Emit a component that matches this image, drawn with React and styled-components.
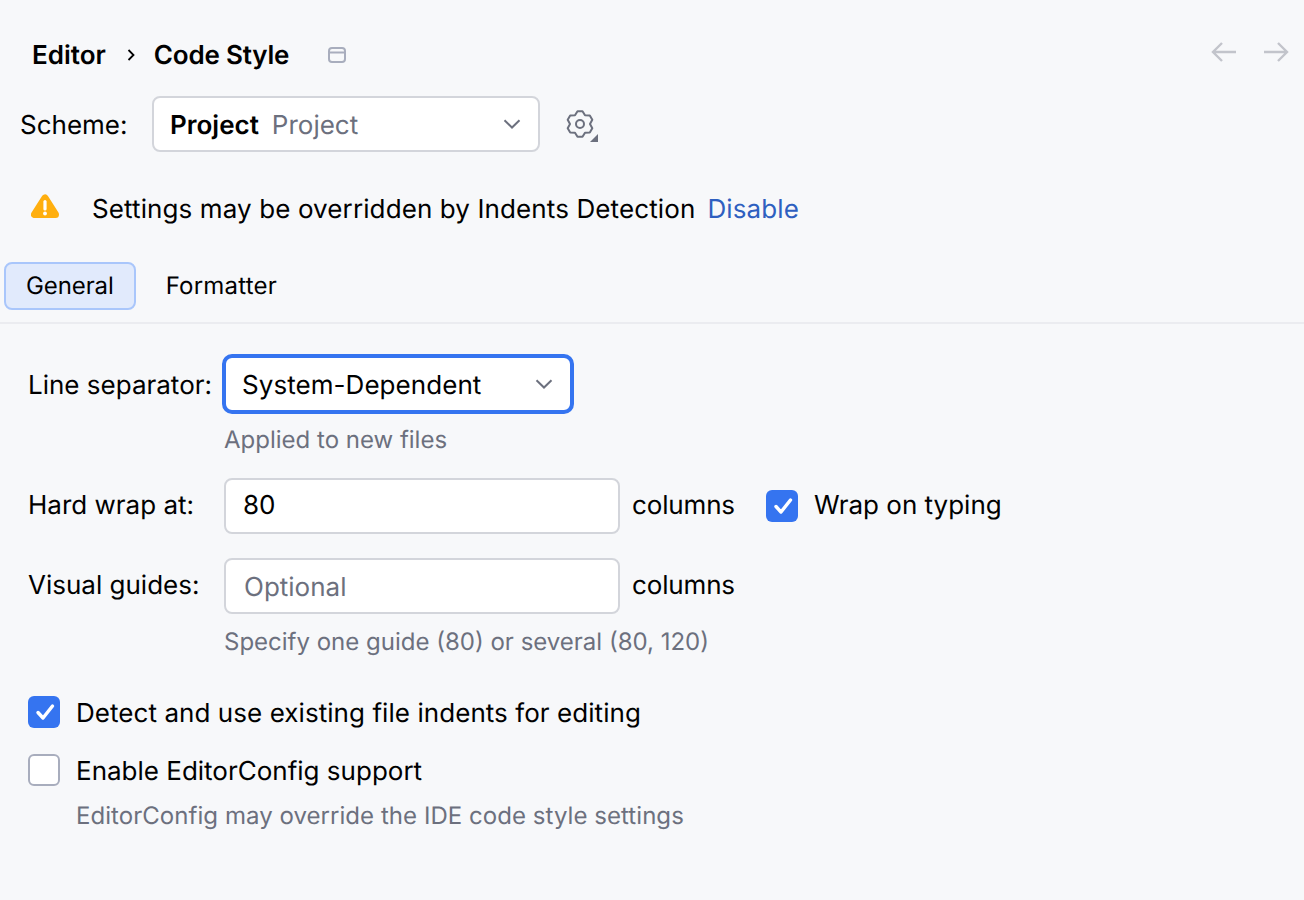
import React from "react";
import styled, { createGlobalStyle } from "styled-components";

const GlobalStyle = createGlobalStyle`
  html, body {
    margin: 0;
    padding: 0;
    background: #f7f8fa;
  }
  body {
    font-family: Inter, "Liberation Sans", sans-serif;
    font-size: 26px;
    color: #000;
    text-rendering: geometricPrecision;
  }
`;

const Page = styled.div`
  width: 1304px;
  height: 900px;
  overflow: hidden;
  display: flex;
  flex-direction: column;
`;

const Header = styled.div`
  height: 36px;
  margin-top: 37px;
  padding: 0 15px 0 32px;
  display: flex;
  align-items: center;
`;

const Crumb = styled.span`
  font-weight: 600;
  line-height: 36px;
  padding-top: 2px;
  letter-spacing: ${(p) => p.$tracking || 0}px;
`;

const CrumbArrow = styled.svg`
  width: 10px;
  height: 16px;
  margin: 0 18px 0 20px;
`;

const PinIcon = styled.svg`
  width: 18px;
  height: 18px;
  margin-left: 39px;
`;

const NavArrows = styled.div`
  margin: 0 0 6px auto;
  display: flex;
  gap: 26px;
`;

const SchemeRow = styled.div`
  margin-top: 23px;
  padding-left: 20px;
  display: flex;
  align-items: center;
  height: 56px;
`;

const SchemeLabel = styled.span`
  width: 132px;
  padding-top: 2px;
`;

const Select = styled.div`
  box-sizing: border-box;
  flex-shrink: 0;
  width: ${(p) => p.$width}px;
  height: ${(p) => (p.$focused ? 60 : 56)}px;
  margin-left: ${(p) => (p.$focused ? -2 : 0)}px;
  background: #fff;
  border: ${(p) => (p.$focused ? "4px solid #3574f0" : "2px solid #d3d5db")};
  border-radius: ${(p) => (p.$focused ? 10 : 8)}px;
  display: flex;
  align-items: center;
  padding: 0 17px 0 16px;
`;

const SelectText = styled.span`
  padding-top: 2px;
  letter-spacing: ${(p) => p.$tracking || 0}px;
`;

const Bold = styled(SelectText)`
  font-weight: 600;
`;

const Muted = styled(SelectText)`
  color: #6c707e;
  margin-left: 13px;
`;

const Chevron = styled.svg`
  width: 18px;
  height: 10px;
  margin-left: auto;
`;

const GearWrap = styled.div`
  position: relative;
  width: 32px;
  height: 32px;
  margin: 2px 0 0 24px;
`;

const Corner = styled.svg`
  position: absolute;
  right: -2px;
  bottom: -1px;
  width: 8px;
  height: 8px;
`;

const Notice = styled.div`
  margin-top: 28px;
  padding-left: 31px;
  height: 56px;
  display: flex;
  align-items: center;
`;

const WarnIcon = styled.svg`
  width: 28px;
  height: 24px;
  margin: 0 33px 4px 0;
`;

const NoticeText = styled.span`
  padding-top: 2px;
  letter-spacing: 0.11px;
`;

const Link = styled.a`
  color: #2e5fc0;
  margin-left: 12px;
  padding-top: 2px;
  letter-spacing: 0.12px;
`;

const Tabs = styled.div`
  margin-top: 26px;
  padding-left: 4px;
  display: flex;
  height: 62px;
  box-sizing: border-box;
  border-bottom: 2px solid #ebecf0;
  align-items: flex-start;
`;

const Tab = styled.div`
  box-sizing: border-box;
  height: 48px;
  padding: 0 20px 2px;
  font-size: 24px;
  display: flex;
  align-items: center;
  border-radius: 8px;
  border: 2px solid ${(p) => (p.$active ? "#a9c6fb" : "transparent")};
  background: ${(p) => (p.$active ? "#e1eafc" : "transparent")};
  margin-right: 8px;
  letter-spacing: ${(p) => (p.$active ? -0.1 : 0.2)}px;
`;

const Form = styled.div`
  padding-left: 28px;
  display: flex;
  flex-direction: column;
`;

const Row = styled.div`
  display: flex;
  align-items: center;
  height: ${(p) => p.$height || 56}px;
  margin-top: ${(p) => p.$top || 0}px;
`;

const Label = styled.span`
  width: 196px;
  flex-shrink: 0;
  padding: ${(p) => (p.$low ? "2px 0 0" : "0 0 2px")};
`;

const Hint = styled.div`
  color: #6c707e;
  font-size: 24px;
  line-height: 30px;
  margin-top: ${(p) => p.$top || 0}px;
  margin-left: ${(p) => p.$left}px;
  letter-spacing: ${(p) => p.$tracking || 0}px;
`;

const Field = styled.div`
  box-sizing: border-box;
  width: 396px;
  height: 56px;
  background: #fff;
  border: 2px solid #d3d5db;
  border-radius: 8px;
  padding: ${(p) => (p.$placeholder ? "2px 18px 0" : "0 17px 2px")};
  display: flex;
  align-items: center;
  color: ${(p) => (p.$placeholder ? "#6c707e" : "#000")};
`;

const Unit = styled.span`
  margin-left: 12px;
  padding-bottom: 2px;
  letter-spacing: -0.15px;
`;

const Box = styled.span`
  box-sizing: border-box;
  width: 32px;
  height: 32px;
  border-radius: 6px;
  flex-shrink: 0;
  display: flex;
  align-items: center;
  justify-content: center;
  background: ${(p) => (p.$checked ? "#3574f0" : "#fff")};
  border: ${(p) => (p.$checked ? "none" : "2px solid #a8adbd")};
`;

const CheckText = styled.span`
  margin-left: 16px;
  padding: ${(p) => (p.$low ? "2px 0 0" : "0 0 2px")};
  letter-spacing: ${(p) => p.$tracking || 0}px;
`;

const InlineCheck = styled.div`
  display: flex;
  align-items: center;
  margin-left: 31px;
`;

const Arrow = ({ flip }) => (
  <svg width="26" height="22" viewBox="0 0 26 22" fill="none" style={flip ? { transform: "scaleX(-1)" } : undefined}>
    <path d="M25 11H2M11 2L2 11l9 9" stroke="#c2c4cb" strokeWidth="2.4" />
  </svg>
);

const Check = () => (
  <svg width="22" height="18" viewBox="0 0 22 18" fill="none">
    <path d="M5 9.500l5 5.500L19.500 3" stroke="#fff" strokeWidth="3.4" strokeLinecap="round" strokeLinejoin="round" />
  </svg>
);

const Checkbox = ({ checked, low, tracking, children }) => (
  <>
    <Box $checked={checked}>{checked && <Check />}</Box>
    <CheckText $low={low} $tracking={tracking}>{children}</CheckText>
  </>
);

const ChevronDown = () => (
  <Chevron viewBox="0 0 18 10" fill="none">
    <path d="M1.500 1.200L9 8.500l7.500-7.300" stroke="#6c707e" strokeWidth="2" />
  </Chevron>
);

export default function App() {
  return (
    <Page>
      <GlobalStyle />
      <Header>
        <Crumb>Editor</Crumb>
        <CrumbArrow viewBox="0 0 10 16" fill="none">
          <path d="M2.500 3l5 5-5 5" stroke="#000" strokeWidth="1.800" />
        </CrumbArrow>
        <Crumb $tracking={-0.2}>Code Style</Crumb>
        <PinIcon viewBox="0 0 18 18" fill="none">
          <rect x="1" y="2" width="16" height="14" rx="3" stroke="#a8adbd" strokeWidth="2" />
          <path d="M1 6.500h16" stroke="#a8adbd" strokeWidth="2" />
        </PinIcon>
        <NavArrows>
          <Arrow />
          <Arrow flip />
        </NavArrows>
      </Header>

      <SchemeRow>
        <SchemeLabel>Scheme:</SchemeLabel>
        <Select $width={388}>
          <Bold>Project</Bold>
          <Muted>Project</Muted>
          <ChevronDown />
        </Select>
        <GearWrap>
          <svg width="32" height="32" viewBox="0 0 32 32" fill="none">
            <path
              d="M13.500 2.200h5L21 6.340l4.800.16 2.500 4.300L26 15l2.300 4.200-2.500 4.300-4.800.16-2.500 4.140h-5L11 23.660l-4.800-.16-2.500-4.300L6 15l-2.300-4.200 2.500-4.300 4.800-.16z"
              stroke="#6c707e"
              strokeWidth="2"
              strokeLinejoin="round"
            />
            <circle cx="16" cy="15" r="4" stroke="#6c707e" strokeWidth="2" />
          </svg>
          <Corner viewBox="0 0 8 8">
            <path d="M8 0v8H0z" fill="#6c707e" />
          </Corner>
        </GearWrap>
      </SchemeRow>

      <Notice>
        <WarnIcon viewBox="0 0 28 24">
          <path d="M14 4L3.500 20.500h21z" fill="#ffaf0f" stroke="#ffaf0f" strokeWidth="7" strokeLinejoin="round" />
          <rect x="12.400" y="6" width="3.200" height="10.500" rx="1.600" fill="#fff" />
          <circle cx="14" cy="19.500" r="1.900" fill="#fff" />
        </WarnIcon>
        <NoticeText>Settings may be overridden by Indents Detection</NoticeText>
        <Link>Disable</Link>
      </Notice>

      <Tabs>
        <Tab $active>General</Tab>
        <Tab>Formatter</Tab>
      </Tabs>

      <Form>
        <Row $height={60} $top={30}>
          <Label $low>Line separator:</Label>
          <Select $width={352} $focused>
            <SelectText $tracking={0.06}>System-Dependent</SelectText>
            <ChevronDown />
          </Select>
        </Row>
        <Hint $left={196} $top={11}>Applied to new files</Hint>
        <Row $top={23}>
          <Label>Hard wrap at:</Label>
          <Field>80</Field>
          <Unit>columns</Unit>
          <InlineCheck>
            <Checkbox checked>Wrap on typing</Checkbox>
          </InlineCheck>
        </Row>
        <Row $top={24}>
          <Label>Visual guides:</Label>
          <Field $placeholder>Optional</Field>
          <Unit>columns</Unit>
        </Row>
        <Hint $left={196} $top={13}>Specify one guide (80) or several (80, 120)</Hint>
        <Row $height={32} $top={39}>
          <Checkbox checked low tracking={0.06}>Detect and use existing file indents for editing</Checkbox>
        </Row>
        <Row $height={32} $top={26}>
          <Checkbox low>Enable EditorConfig support</Checkbox>
        </Row>
        <Hint $left={48} $top={15} $tracking={0.05}>EditorConfig may override the IDE code style settings</Hint>
      </Form>
    </Page>
  );
}
